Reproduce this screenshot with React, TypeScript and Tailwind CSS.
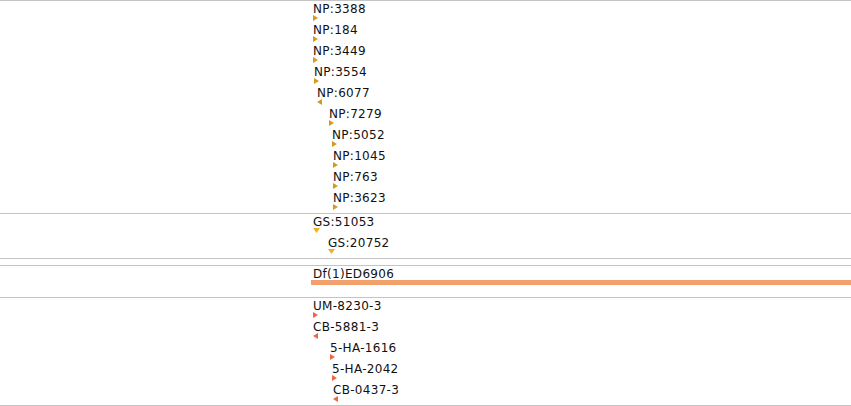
import React from 'react';

type Dir = 'right' | 'left' | 'down';

interface Feature {
    name: string;
    indent: number;
    dir: Dir;
}

const npFeatures: Feature[] = [
    { name: 'NP:3388', indent: 313, dir: 'right' },
    { name: 'NP:184', indent: 313, dir: 'right' },
    { name: 'NP:3449', indent: 313, dir: 'right' },
    { name: 'NP:3554', indent: 314, dir: 'right' },
    { name: 'NP:6077', indent: 317, dir: 'left' },
    { name: 'NP:7279', indent: 329, dir: 'right' },
    { name: 'NP:5052', indent: 332, dir: 'right' },
    { name: 'NP:1045', indent: 333, dir: 'right' },
    { name: 'NP:763', indent: 333, dir: 'right' },
    { name: 'NP:3623', indent: 333, dir: 'right' },
];

const gsFeatures: Feature[] = [
    { name: 'GS:51053', indent: 313, dir: 'down' },
    { name: 'GS:20752', indent: 328, dir: 'down' },
];

const rbFeatures: Feature[] = [
    { name: 'UM-8230-3', indent: 313, dir: 'right' },
    { name: 'CB-5881-3', indent: 313, dir: 'left' },
    { name: '5-HA-1616', indent: 330, dir: 'right' },
    { name: '5-HA-2042', indent: 332, dir: 'right' },
    { name: 'CB-0437-3', indent: 333, dir: 'left' },
];

const Marker: React.FC<{ dir: Dir, color: string }> = ({ dir, color }) => {
    if (dir === 'down') {
        return (
            <svg width="7" height="5" viewBox="0 0 7 5" className="block">
                <polygon points="0,0 7,0 3.5,5" fill={color} />
            </svg>
        );
    }
    return (
        <svg width="5" height="6" viewBox="0 0 5 6" className="block">
            <polygon points={dir === 'right' ? '0,0 5,3 0,6' : '5,0 0,3 5,6'} fill={color} />
        </svg>
    );
};

const FeatureRow: React.FC<{ feature: Feature, color: string }> = ({ feature, color }) => {
    return (
        <div className="h-[21px] flex flex-col" style={{ paddingLeft: feature.indent }}>
            <span className="block h-[14px] leading-[16px] whitespace-nowrap">{feature.name}</span>
            <Marker dir={feature.dir} color={color} />
        </div>
    );
};

const App: React.FC = () => {
    return (
        <div className="w-[851px] h-[406px] bg-white overflow-hidden font-['DejaVu_Sans',sans-serif] text-[12px] tracking-[0.3px] text-[#111]">
            {/* NP track */}
            <div className="border-t border-b border-[#c4c4c4] h-[214px]">
                {npFeatures.map(f => <FeatureRow key={f.name} feature={f} color="#d49a1c" />)}
            </div>

            {/* GS track */}
            <div className="border-b border-[#c4c4c4] h-[45px]">
                {gsFeatures.map(f => <FeatureRow key={f.name} feature={f} color="#f2b01e" />)}
            </div>

            {/* empty track */}
            <div className="border-b border-[#c4c4c4] h-[7px]"></div>

            {/* Deficiency track */}
            <div className="border-b border-[#c4c4c4] h-[32px]">
                <div className="pl-[313px] h-[14px] leading-[16px]">Df(1)ED6906</div>
                <div className="ml-[311px] h-[5px] bg-[#f2a06c]"></div>
            </div>

            {/* RB track */}
            <div className="border-b border-[#c4c4c4] h-[108px]">
                {rbFeatures.map(f => <FeatureRow key={f.name} feature={f} color="#f26446" />)}
            </div>
        </div>
    );
};

export default App;
